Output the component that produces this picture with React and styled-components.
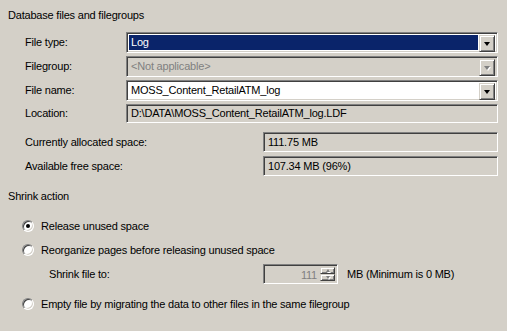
import React from 'react'
import styled, { createGlobalStyle, css } from 'styled-components'

const GlobalStyle = createGlobalStyle`
  html, body {
    margin: 0;
    padding: 0;
    background: #d4d0c8;
  }
  body {
    font-family: "Liberation Sans", Arial, sans-serif;
    font-size: 11px;
    letter-spacing: -0.2px;
    color: #000;
  }
`

const sunken = css`
  box-sizing: border-box;
  border: 1px solid;
  border-color: #808080 #ffffff #ffffff #808080;
  box-shadow: inset 1px 1px #404040, inset -1px -1px #d4d0c8;
`

const raised = css`
  box-sizing: border-box;
  background: #d4d0c8;
  border: 1px solid;
  border-color: #d4d0c8 #404040 #404040 #d4d0c8;
  box-shadow: inset 1px 1px #ffffff, inset -1px -1px #808080;
`

const Page = styled.div`
  width: 507px;
  height: 331px;
  box-sizing: border-box;
  padding: 9px 9px 0 8px;
  display: flex;
  flex-direction: column;
`

const Heading = styled.div`
  height: 13px;
  line-height: 13px;
  margin-top: ${p => p.$top || 0}px;
`

const FileGrid = styled.div`
  margin-top: 10px;
  padding-left: 17px;
  display: grid;
  grid-template-columns: 101px 1fr;
  grid-template-rows: 21px 21px 21px 19px;
  row-gap: 3px;
  align-items: center;
`

const SpaceGrid = styled.div`
  margin-top: 9px;
  padding-left: 17px;
  display: grid;
  grid-template-columns: 238px 1fr;
  grid-auto-rows: 20px;
  row-gap: 4px;
  align-items: center;
`

const Label = styled.div`
  line-height: 13px;
`

const Combo = styled.div`
  ${sunken};
  height: 21px;
  display: flex;
  padding: 2px;
  background: ${p => (p.$disabled ? '#d4d0c8' : '#ffffff')};
`

const ComboText = styled.div`
  flex: 1;
  display: flex;
  align-items: center;
  padding-left: 2px;
  margin-right: 1px;
  line-height: 13px;
  white-space: nowrap;
  overflow: hidden;
  ${p => p.$selected && css`
    background: #0a246a;
    color: #ffffff;
  `}
  ${p => p.$disabled && css`
    color: #808080;
  `}
`

const DropButton = styled.div`
  ${raised};
  width: 16px;
  height: 17px;
  display: flex;
  align-items: center;
  justify-content: center;
`

const Arrow = styled.span`
  width: 0;
  height: 0;
  border-left: 3.5px solid transparent;
  border-right: 3.5px solid transparent;
  border-top: 4px solid ${p => (p.$disabled ? '#808080' : '#000000')};
  margin-top: 1px;
  filter: ${p => (p.$disabled ? 'drop-shadow(1px 1px 0 #ffffff)' : 'none')};
`

const ReadBox = styled.div`
  ${sunken};
  height: ${p => p.$h || 20}px;
  background: #d4d0c8;
  display: flex;
  align-items: center;
  padding-left: 4px;
  line-height: 13px;
  white-space: nowrap;
  overflow: hidden;
`

const Options = styled.div`
  padding-left: 14px;
  display: flex;
  flex-direction: column;
`

const RadioRow = styled.label`
  display: flex;
  align-items: center;
  gap: 7px;
  height: 16px;
  margin-top: ${p => p.$top || 0}px;
  line-height: 13px;
`

const RadioCircle = styled.span`
  box-sizing: border-box;
  width: 12px;
  height: 12px;
  border-radius: 50%;
  border: 1px solid;
  border-color: #808080 #ffffff #ffffff #808080;
  box-shadow: inset 1px 1px #404040, inset -1px -1px #d4d0c8;
  background: #ffffff;
  display: flex;
  align-items: center;
  justify-content: center;
  flex: none;

  &::after {
    content: '';
    width: 4px;
    height: 4px;
    border-radius: 50%;
    background: ${p => (p.$checked ? '#000000' : 'transparent')};
  }
`

const ShrinkRow = styled.div`
  display: flex;
  align-items: center;
  height: 20px;
  margin-top: 6px;
  padding-left: 27px;
`

const ShrinkLabel = styled.div`
  width: 214px;
  line-height: 13px;
`

const Spinner = styled.div`
  ${sunken};
  width: 75px;
  height: 20px;
  display: flex;
  padding: 2px;
  background: #d4d0c8;
`

const SpinValue = styled.div`
  flex: 1;
  text-align: right;
  color: #808080;
  line-height: 16px;
  padding-right: 3px;
`

const SpinButtons = styled.div`
  width: 15px;
  display: flex;
  flex-direction: column;
`

const SpinButton = styled.div`
  ${raised};
  flex: 1;
  display: flex;
  align-items: center;
  justify-content: center;
`

const SpinArrow = styled.span`
  width: 0;
  height: 0;
  border-left: 2.5px solid transparent;
  border-right: 2.5px solid transparent;
  ${p => (p.$up
    ? css`border-bottom: 3px solid #808080;`
    : css`border-top: 3px solid #808080;`)}
  filter: drop-shadow(1px 1px 0 #ffffff);
`

const Unit = styled.div`
  margin-left: 9px;
  line-height: 13px;
`

const ComboBox = ({ value, selected, disabled }) => (
  <Combo $disabled={disabled}>
    <ComboText $selected={selected} $disabled={disabled}>{value}</ComboText>
    <DropButton>
      <Arrow $disabled={disabled} />
    </DropButton>
  </Combo>
)

const Radio = ({ checked, children, top }) => (
  <RadioRow $top={top}>
    <RadioCircle $checked={checked} />
    <span>{children}</span>
  </RadioRow>
)

const App = () => {
  return (
    <Page>
      <GlobalStyle />
      <Heading>Database files and filegroups</Heading>

      <FileGrid>
        <Label>File type:</Label>
        <ComboBox value='Log' selected />
        <Label>Filegroup:</Label>
        <ComboBox value='<Not applicable>' disabled />
        <Label>File name:</Label>
        <ComboBox value='MOSS_Content_RetailATM_log' />
        <Label>Location:</Label>
        <ReadBox $h={19}>D:\DATA\MOSS_Content_RetailATM_log.LDF</ReadBox>
      </FileGrid>

      <SpaceGrid>
        <Label>Currently allocated space:</Label>
        <ReadBox>111.75 MB</ReadBox>
        <Label>Available free space:</Label>
        <ReadBox>107.34 MB (96%)</ReadBox>
      </SpaceGrid>

      <Heading $top={14}>Shrink action</Heading>

      <Options>
        <Radio checked top={15}>Release unused space</Radio>
        <Radio top={8}>Reorganize pages before releasing unused space</Radio>
        <ShrinkRow>
          <ShrinkLabel>Shrink file to:</ShrinkLabel>
          <Spinner>
            <SpinValue>111</SpinValue>
            <SpinButtons>
              <SpinButton><SpinArrow $up /></SpinButton>
              <SpinButton><SpinArrow /></SpinButton>
            </SpinButtons>
          </Spinner>
          <Unit>MB (Minimum is 0 MB)</Unit>
        </ShrinkRow>
        <Radio top={12}>Empty file by migrating the data to other files in the same filegroup</Radio>
      </Options>
    </Page>
  )
}

export default App
